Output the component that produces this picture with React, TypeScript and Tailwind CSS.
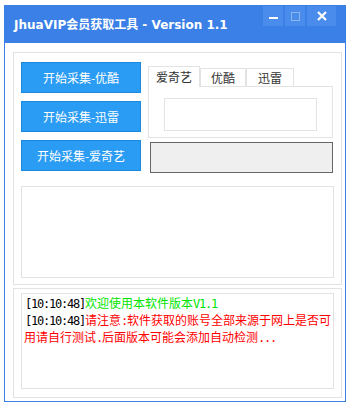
import React from "react";

const cjk = "font-['Noto_Sans_CJK_SC',sans-serif]";

function A({ children }: { children: React.ReactNode }) {
  return (
    <span className="font-['DejaVu_Sans_Mono',monospace] text-[12px] tracking-[-1.22px]">
      {children}
    </span>
  );
}

function Btn({ label }: { label: string }) {
  return (
    <div
      className={`h-[31px] w-[120px] flex items-center justify-center bg-[#2b9cf3] border border-[#1b88e0] text-white text-[12px] ${cjk}`}
    >
      {label}
    </div>
  );
}

export default function App() {
  return (
    <div className="w-[351px] h-[407px] bg-white pt-[5px] pl-[4px]">
      <div className="w-[342px] h-[397px] border border-[#3b80e6] bg-white flex flex-col">
        {/* title bar */}
        <div className="h-[37px] bg-[#3b80e6] flex justify-between pl-[9px] pr-[9px]">
          <div
            className="self-center mt-[1px] text-white text-[12px] font-bold font-['DejaVu_Sans','Noto_Sans_CJK_SC',sans-serif]"
          >
            JhuaVIP会员获取工具 - Version 1.1
          </div>
          <div className="flex gap-[2px] self-start">
            <div className="w-[20px] h-[20px] bg-[#4a8ceb] flex items-center justify-center">
              <div className="w-[9px] h-[2px] bg-white mt-[4px]" />
            </div>
            <div className="w-[20px] h-[20px] bg-[#4a8ceb] flex items-center justify-center">
              <div className="w-[9px] h-[9px] border border-[#8ab6f2]" />
            </div>
            <div className="w-[29px] h-[20px] bg-[#4a8ceb] flex items-center justify-center">
              <svg width="10" height="10" viewBox="0 0 10 10">
                <path d="M1 1L9 9M9 1L1 9" stroke="white" strokeWidth="2.2" />
              </svg>
            </div>
          </div>
        </div>

        {/* panel 1 */}
        <div className="ml-[8px] mt-[9px] w-[329px] h-[233px] border border-[#e3e3e3] pl-[7px] pt-[9px]">
          <div className="flex gap-[7px]">
            <div className="flex flex-col gap-[8px]">
              <Btn label="开始采集-优酷" />
              <Btn label="开始采集-迅雷" />
              <Btn label="开始采集-爱奇艺" />
            </div>
            <div className="w-[185px] mt-[4px] flex flex-col">
              <div className={`flex items-end text-[12px] text-[#333] ${cjk}`}>
                <div className="relative z-10 w-[52px] h-[21px] -mb-px border-l border-t border-r border-[#e3e3e3] bg-white flex items-center justify-center">
                  爱奇艺
                </div>
                <div className="w-[46px] h-[18px] border-l border-t border-r border-[#e3e3e3] flex items-center justify-center pt-[1px]">
                  优酷
                </div>
                <div className="w-[48px] h-[18px] border-l border-t border-r border-[#e3e3e3] flex items-center justify-center pt-[1px]">
                  迅雷
                </div>
              </div>
              <div className="h-[52px] border border-[#e3e3e3] pt-[11px] pl-[15px]">
                <div className="w-[153px] h-[33px] border border-[#e3e3e3]" />
              </div>
              <div className="mt-[4px] ml-[2px] w-[183px] h-[31px] border border-[#666666] bg-[#efefef]" />
            </div>
          </div>
          <div className="mt-[13px] w-[313px] h-[92px] border border-[#e3e3e3]" />
        </div>

        {/* panel 2 */}
        <div className="ml-[8px] mt-[3px] w-[329px] h-[110px] border border-[#e3e3e3] pl-[7px] pt-[4px]">
          <div className="w-[313px] h-[96px] border border-[#e3e3e3] pl-[3px] pt-[1px] leading-[16px] text-[12px]">
            <div className={`whitespace-nowrap ${cjk}`}>
              <span className="text-black">
                <A>[10:10:48]</A>
              </span>
              <span className="text-[#00e400]">
                欢迎使用本软件版本<A>V1.1</A>
              </span>
            </div>
            <div className={`whitespace-nowrap ${cjk}`}>
              <span className="text-black">
                <A>[10:10:48]</A>
              </span>
              <span className="text-[#ff0000]">
                请注意<A>:</A>软件获取的账号全部来源于网上是否可
              </span>
            </div>
            <div className={`whitespace-nowrap -ml-[1px] text-[#ff0000] ${cjk}`}>
              用请自行测试<A>.</A>后面版本可能会添加自动检测<A>...</A>
            </div>
          </div>
        </div>
      </div>
    </div>
  );
}
